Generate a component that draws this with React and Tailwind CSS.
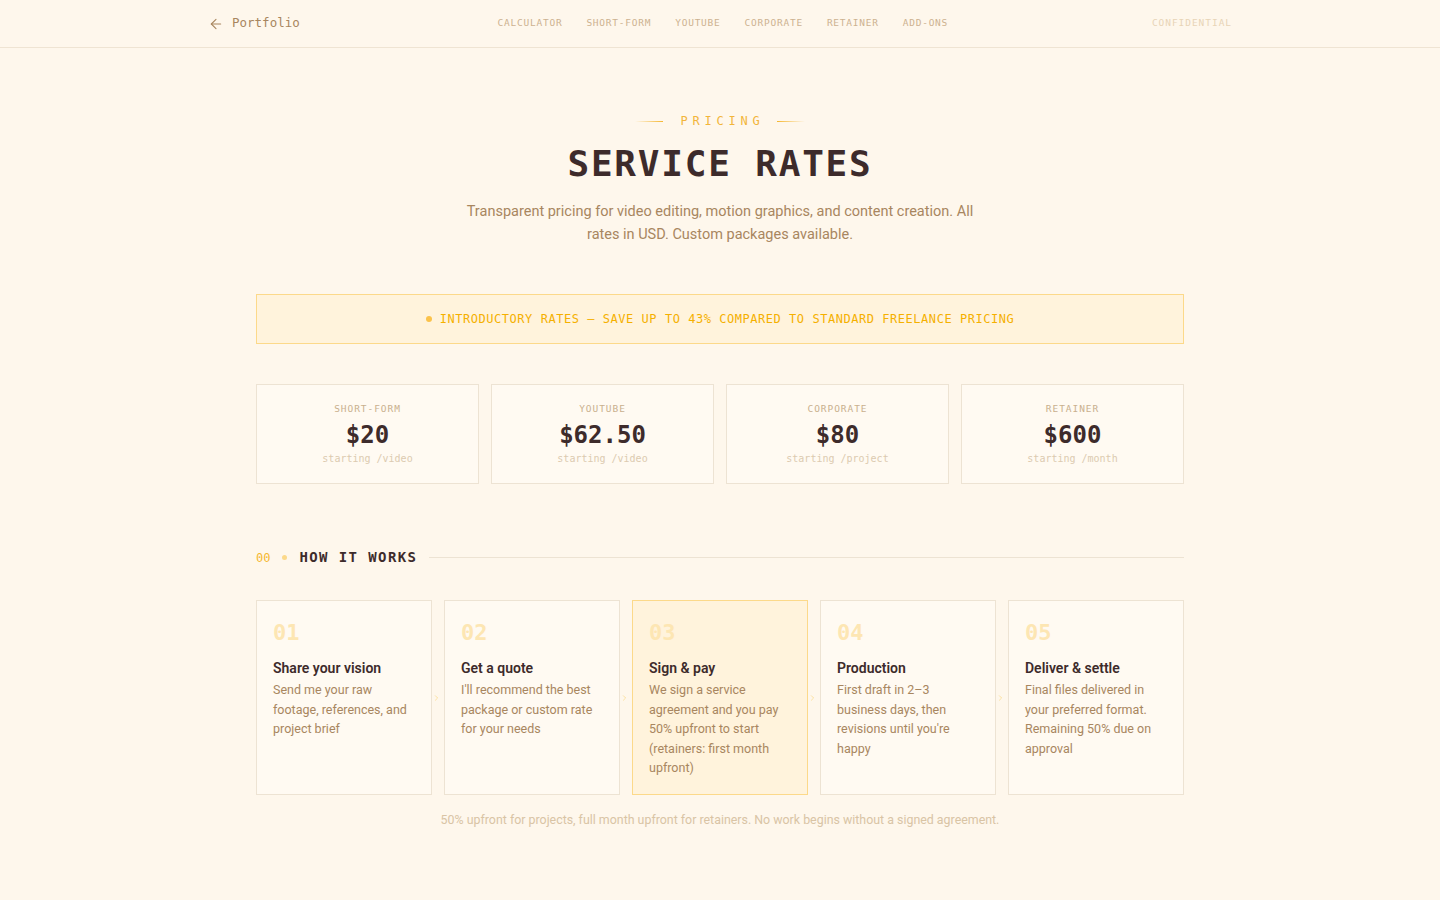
import { ArrowLeft, ChevronRight } from 'lucide-react';

const mono = { fontFamily: '"DejaVu Sans Mono", "Liberation Mono", monospace' };
const sans = { fontFamily: 'Roboto, Inter, "Noto Sans", sans-serif' };

const navLinks = ['Calculator', 'Short-form', 'YouTube', 'Corporate', 'Retainer', 'Add-ons'];

const rates = [
  { label: 'Short-form', price: '$20', unit: 'starting /video' },
  { label: 'YouTube', price: '$62.50', unit: 'starting /video' },
  { label: 'Corporate', price: '$80', unit: 'starting /project' },
  { label: 'Retainer', price: '$600', unit: 'starting /month' },
];

const steps = [
  { n: '01', title: 'Share your vision', text: 'Send me your raw footage, references, and project brief' },
  { n: '02', title: 'Get a quote', text: "I'll recommend the best package or custom rate for your needs" },
  { n: '03', title: 'Sign & pay', text: 'We sign a service agreement and you pay 50% upfront to start (retainers: first month upfront)', active: true },
  { n: '04', title: 'Production', text: "First draft in 2–3 business days, then revisions until you're happy" },
  { n: '05', title: 'Deliver & settle', text: 'Final files delivered in your preferred format. Remaining 50% due on approval' },
];

export default function App() {
  return (
    <div className="min-h-screen bg-[#fef7ec] text-[#3d2b2b]" style={sans}>
      {/* top bar */}
      <header className="border-b border-[#efe4d3]">
        <div className="max-w-[1024px] mx-auto h-[47px] flex items-center justify-between">
          <a className="flex items-center gap-[8px] text-[12.5px] text-[#a8865f]" style={mono}>
            <ArrowLeft className="w-[16px] h-[16px]" strokeWidth={1.6} />
            Portfolio
          </a>
          <nav className="flex items-center gap-6 mr-[6px]" style={mono}>
            {navLinks.map((l) => (
              <span key={l} className="text-[9.5px] uppercase tracking-[0.08em] text-[#cdb290]">{l}</span>
            ))}
          </nav>
          <span className="text-[9.5px] uppercase tracking-[0.1em] text-[#e8d4b6]" style={mono}>Confidential</span>
        </div>
      </header>

      <main className="max-w-[928px] mx-auto pt-[64px] pb-20">
        {/* hero */}
        <div className="flex flex-col items-center text-center">
          <div className="flex items-center gap-3">
            <span className="w-[28px] h-px bg-gradient-to-r from-transparent to-[#f5b731]"></span>
            <span className="text-[12px] uppercase tracking-[0.4em] text-[#f2b53a] pl-[5px]" style={mono}>Pricing</span>
            <span className="w-[28px] h-px bg-gradient-to-r from-[#f5b731] to-transparent"></span>
          </div>
          <h1 className="mt-[10px] text-[36px] leading-[48px] font-bold tracking-[0.05em] text-[#3d2b2b]" style={mono}>
            SERVICE RATES
          </h1>
          <p className="mt-[12px] max-w-[520px] text-[14.5px] leading-[23px] text-[#a8865f]">
            Transparent pricing for video editing, motion graphics, and content creation. All rates in USD. Custom packages available.
          </p>
        </div>

        {/* banner */}
        <div className="mt-[48px] h-[50px] border border-[#fcd98a] bg-[#fff3dc] flex items-center justify-center gap-2">
          <span className="w-[6px] h-[6px] rounded-full bg-[#fbc24a]"></span>
          <span className="text-[12px] uppercase tracking-[0.045em] text-[#f5b000]" style={mono}>
            Introductory rates — save up to 43% compared to standard freelance pricing
          </span>
        </div>

        {/* rate cards */}
        <div className="mt-[40px] grid grid-cols-4 gap-3">
          {rates.map((r) => (
            <div key={r.label} className="h-[100px] border border-[#ede3d3] bg-[#fffaf2] flex flex-col items-center justify-center">
              <div className="text-[9.5px] uppercase tracking-[0.1em] text-[#c9b08e]" style={mono}>{r.label}</div>
              <div className="mt-[5px] text-[24px] leading-[28px] font-bold text-[#3d2b2b]" style={mono}>{r.price}</div>
              <div className="mt-[2px] text-[10px] text-[#dccab0]" style={mono}>{r.unit}</div>
            </div>
          ))}
        </div>

        {/* how it works */}
        <div className="mt-[63px] flex items-center gap-3">
          <span className="text-[12px] text-[#f5b731]" style={mono}>00</span>
          <span className="w-[5px] h-[5px] rounded-full bg-[#fcd98a]"></span>
          <span className="text-[14px] font-bold tracking-[0.1em] text-[#3d2b2b]" style={mono}>HOW IT WORKS</span>
          <span className="flex-1 h-px bg-[#ede3d3]"></span>
        </div>

        <div className="mt-[32px] grid grid-cols-5 gap-3">
          {steps.map((s, i) => (
            <div
              key={s.n}
              className={`relative h-[195px] border px-[16px] pt-[17px] ${s.active ? 'border-[#fcd98a] bg-[#fff3dc]' : 'border-[#ede3d3] bg-[#fffaf2]'}`}
            >
              <div className="text-[22px] leading-[30px] font-bold text-[#fde6b3]" style={mono}>{s.n}</div>
              <div className="mt-[10px] text-[14px] leading-[20px] font-semibold text-[#3d2b2b]">{s.title}</div>
              <p className="mt-[2px] text-[12.5px] leading-[19.5px] text-[#a8865f]">{s.text}</p>
              {i < steps.length - 1 && (
                <ChevronRight className="absolute top-1/2 -right-[10px] -translate-y-1/2 w-[9px] h-[9px] text-[#fcd98a]" strokeWidth={2} />
              )}
            </div>
          ))}
        </div>

        <p className="mt-[16px] text-center text-[12.4px] text-[#d9c4a5]">
          50% upfront for projects, full month upfront for retainers. No work begins without a signed agreement.
        </p>
      </main>
    </div>
  );
}
